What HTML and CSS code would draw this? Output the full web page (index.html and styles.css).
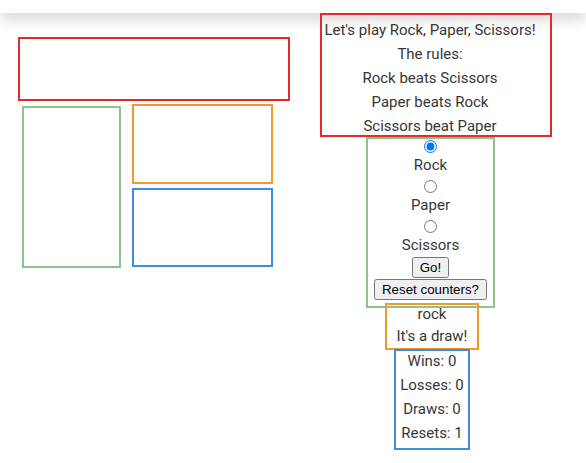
FILE: index.html
```html
<!DOCTYPE html>
<html lang="en">
<head>
<meta charset="utf-8">
<title>Rock, Paper, Scissors</title>
<link rel="stylesheet" href="styles.css">
</head>
<body>
<header class="topbar"></header>
<main class="page">
  <section class="diagram" aria-hidden="true">
    <div class="d-red"></div>
    <div class="d-row">
      <div class="d-green"></div>
      <div class="d-stack">
        <div class="d-orange"></div>
        <div class="d-blue"></div>
      </div>
    </div>
  </section>
  <section class="game">
    <div class="rules">
      <div class="line">Let's play Rock, Paper, Scissors!</div>
      <div class="line">The rules:</div>
      <div class="line">Rock beats Scissors</div>
      <div class="line">Paper beats Rock</div>
      <div class="line">Scissors beat Paper</div>
    </div>
    <form class="choices">
      <input class="radio" type="radio" name="choice" id="c-rock" checked>
      <label class="line label" for="c-rock">Rock</label>
      <input class="radio" type="radio" name="choice" id="c-paper">
      <label class="line label" for="c-paper">Paper</label>
      <input class="radio" type="radio" name="choice" id="c-scissors">
      <label class="line label last" for="c-scissors">Scissors</label>
      <button class="btn" type="button">Go!</button>
      <button class="btn" type="button">Reset counters?</button>
    </form>
    <div class="result">
      <div class="line">rock</div>
      <div class="line">It's a draw!</div>
    </div>
    <div class="score">
      <div class="line">Wins: 0</div>
      <div class="line">Losses: 0</div>
      <div class="line">Draws: 0</div>
      <div class="line">Resets: 1</div>
    </div>
  </section>
</main>
</body>
</html>
```

FILE: styles.css
```css
html, body {
  margin: 0;
  padding: 0;
  background: #ffffff;
}

body {
  font-family: Roboto, "Open Sans", sans-serif;
  font-size: 15px;
  color: #363636;
}

.topbar {
  height: 13px;
  background: #ffffff;
  box-shadow: 0 6px 14px rgba(0, 0, 0, 0.18);
}

.page {
  display: flex;
  align-items: flex-start;
  padding-left: 18px;
  gap: 30px;
}

/* left diagram */
.diagram {
  margin-top: 24px;
  width: 272px;
}

.d-red {
  box-sizing: border-box;
  height: 64px;
  border: 2px solid #e32b2b;
}

.d-row {
  display: flex;
  align-items: flex-start;
  margin-top: 3px;
  padding-left: 4px;
  gap: 11px;
}

.d-green {
  box-sizing: border-box;
  width: 99px;
  height: 162px;
  margin-top: 2px;
  border: 2px solid #8cc48c;
}

.d-stack {
  display: flex;
  flex-direction: column;
  gap: 4px;
}

.d-orange {
  box-sizing: border-box;
  width: 141px;
  height: 80px;
  border: 2px solid #ef9a2a;
}

.d-blue {
  box-sizing: border-box;
  width: 141px;
  height: 79px;
  border: 2px solid #3b8de0;
}

/* game column */
.game {
  display: flex;
  flex-direction: column;
  align-items: flex-start;
  width: 232px;
}

.line {
  display: block;
  line-height: 24px;
  text-align: center;
  white-space: nowrap;
}

.rules {
  box-sizing: border-box;
  width: 232px;
  height: 124px;
  padding: 3px 12px 0 0;
  border: 2px solid #e32b2b;
}

.choices {
  box-sizing: border-box;
  display: flex;
  flex-direction: column;
  align-items: center;
  width: 129px;
  margin: 0 0 0 46px;
  padding: 1px 5px 6px;
  border: 2px solid #8cc48c;
}

.radio {
  display: block;
  width: 13px;
  height: 13px;
  margin: 0;
}

.label {
  line-height: 23px;
  padding-top: 1px;
  margin-bottom: 3px;
}

.label.last {
  margin-bottom: 0;
}

.btn {
  font-family: "Liberation Sans", Arial, sans-serif;
  font-size: 13.3333px;
  margin: 0;
}

.btn + .btn {
  margin-top: 1px;
}

.result {
  box-sizing: border-box;
  width: 94px;
  height: 47px;
  margin: -5px 0 0 65px;
  border: 2px solid #ef9a2a;
}

.result .line {
  line-height: 22px;
}

.result .line:first-child {
  margin-top: -2px;
}

.score {
  box-sizing: border-box;
  width: 76px;
  height: 101px;
  margin: -1px 0 0 74px;
  border: 2px solid #3b8de0;
}

.score .line:first-child {
  margin-top: -2px;
}
```
